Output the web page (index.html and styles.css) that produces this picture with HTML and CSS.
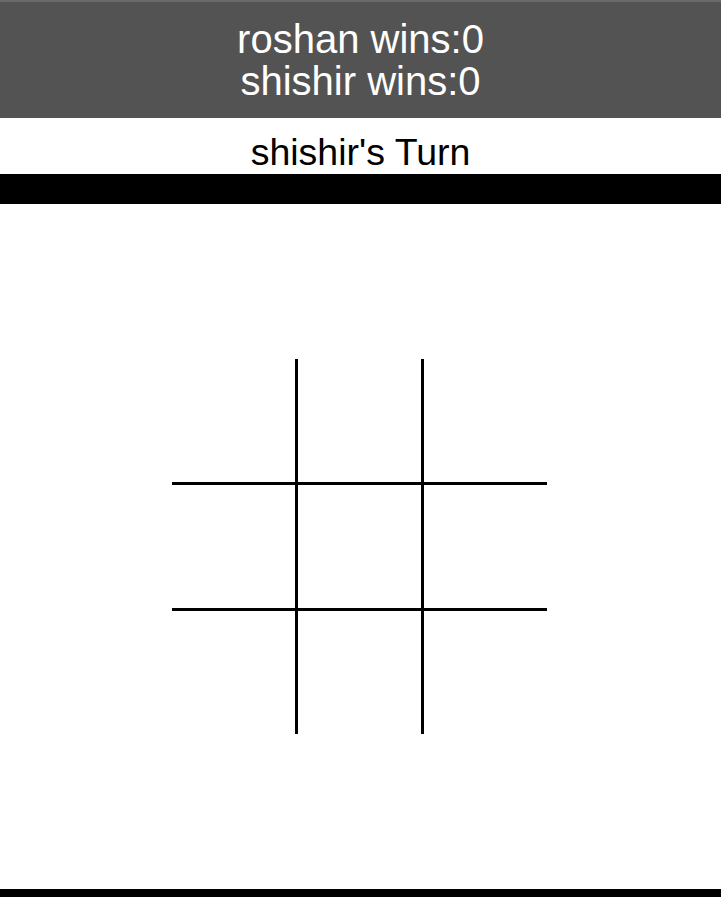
FILE: index.html
```html
<!DOCTYPE html>
<html>
<head>
<meta charset="utf-8">
<link rel="stylesheet" href="styles.css">
</head>
<body>
<div class="scores">
  <div class="score">roshan wins:0</div>
  <div class="score">shishir wins:0</div>
</div>
<div class="turn">shishir's Turn</div>
<div class="bar"></div>
<main class="stage">
  <div class="board">
    <div class="cell"></div><div class="cell"></div><div class="cell"></div>
    <div class="cell"></div><div class="cell"></div><div class="cell"></div>
    <div class="cell"></div><div class="cell"></div><div class="cell"></div>
  </div>
</main>
<div class="bottom-bar"></div>
</body>
</html>
```
FILE: styles.css
```css
html, body {
  margin: 0;
  padding: 0;
  background: #ffffff;
  font-family: "Liberation Sans", Arial, sans-serif;
}
.scores {
  background: #535353;
  border-top: 2px solid #6a6a6a;
  color: #ffffff;
  text-align: center;
  font-size: 40px;
  line-height: 42px;
  padding: 16px 0 16px;
}
.turn {
  text-align: center;
  font-size: 37.5px;
  line-height: 42px;
  color: #000000;
  padding: 13px 0 1px;
}
.bar {
  height: 30px;
  background: #000000;
}
.stage {
  height: 685px;
  display: flex;
  align-items: center;
  justify-content: center;
}
.board {
  display: grid;
  grid-template-columns: 123px 123px 123px;
  grid-template-rows: 123px 123px 123px;
  gap: 3px;
  background: #000000;
  margin-left: -2px;
}
.cell {
  background: #ffffff;
}
.bottom-bar {
  height: 30px;
  background: #000000;
}
```
